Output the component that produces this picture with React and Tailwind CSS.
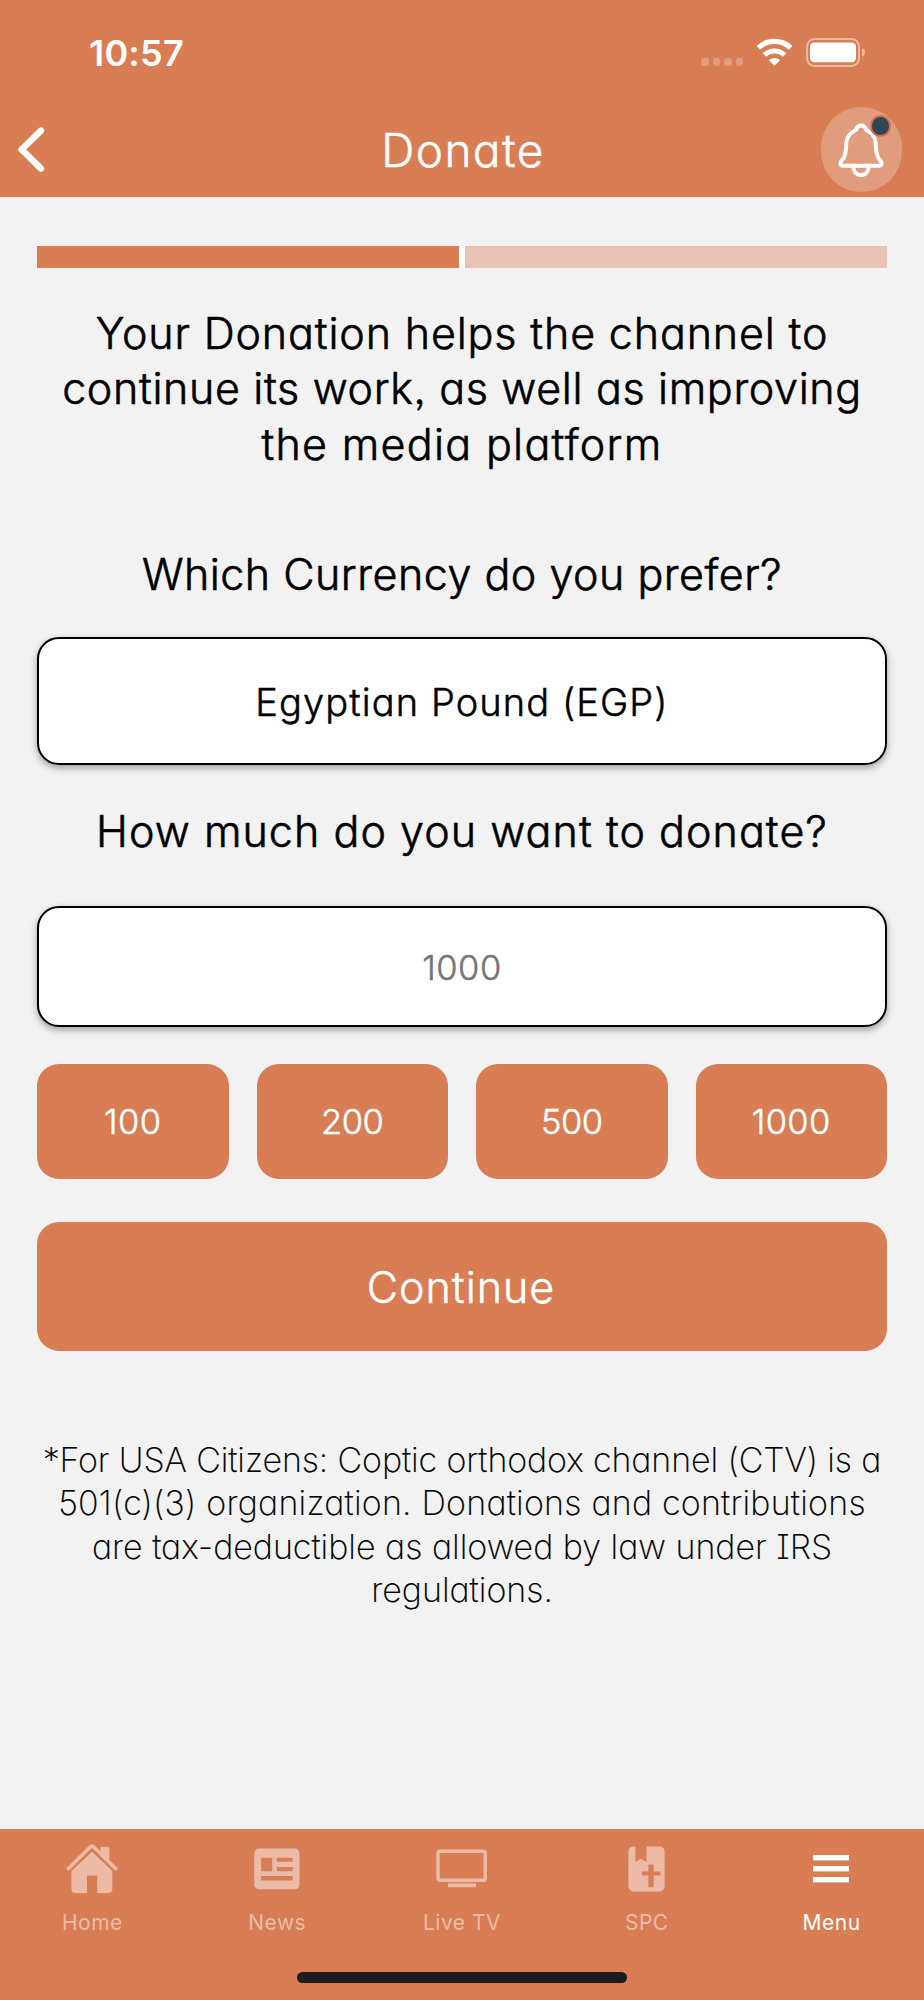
import { useState } from 'react';

const AMOUNTS = [
  { value: '100', tracking: 'tracking-[0.5px]' },
  { value: '200', tracking: 'tracking-[-0.5px]' },
  { value: '500', tracking: 'tracking-[-0.5px]' },
  { value: '1000', tracking: 'tracking-[0.4px]' },
];

function HomeIcon() {
  return (
    <svg width="52" height="50" viewBox="0 0 52 50" fill="currentColor">
      <path d="M2.5 24.5 L24.5 2.8 Q26 1.5 27.5 2.8 L49.5 24.5" fill="none" stroke="currentColor" strokeWidth="3.6" strokeLinecap="round" strokeLinejoin="round" />
      <path d="M34.5 7.8 V4.4 Q34.5 2.8 36.1 2.8 H41.7 Q43.3 2.8 43.3 4.4 V16.6 Z" />
      <path d="M26 7.8 L46.3 27 V45 Q46.3 49 42.3 49 H31.2 V31.6 H21 V49 H9.4 Q5.4 49 5.4 45 V27 Z" />
    </svg>
  );
}

function NewsIcon() {
  return (
    <svg width="46" height="42" viewBox="0 0 46 42" fill="currentColor" fillRule="evenodd">
      <path d="M4.6 0.6 H41 A4.5 4.5 0 0 1 45.5 5.1 V36.7 A4.5 4.5 0 0 1 41 41.2 H4.6 A4.5 4.5 0 0 1 .2 36.7 V5.1 A4.5 4.5 0 0 1 4.6 .6 Z M7.1 9.7 V23.3 H18.2 V9.7 Z M22.8 9.7 V13.8 H38.7 V9.7 Z M22.8 19 V23.3 H38.7 V19 Z M7.1 28.1 V32.4 H38.7 V28.1 Z" />
    </svg>
  );
}

function TvIcon() {
  return (
    <svg width="52" height="40" viewBox="0 0 52 40">
      <rect x="2" y="2.2" width="47.2" height="29" rx="1.8" fill="none" stroke="currentColor" strokeWidth="3.4" />
      <rect x="12" y="34.4" width="28" height="3.8" fill="currentColor" />
    </svg>
  );
}

function BookIcon() {
  return (
    <svg width="37" height="46" viewBox="0 0 37 46" fill="currentColor" fillRule="evenodd">
      <path d="M5 .5 H7.4 V16 L12.8 12.8 L18.5 16 V.5 H31.8 A4.8 4.8 0 0 1 36.6 5.3 V40.6 A4.8 4.8 0 0 1 31.8 45.4 H5.2 A4.8 4.8 0 0 1 .4 40.6 V5.3 A4.8 4.8 0 0 1 5 .5 Z M20.4 18.6 V25.4 H13.8 V29.6 H20.4 V41.2 H25.6 V29.6 H32.4 V25.4 H25.6 V18.6 Z" />
    </svg>
  );
}

function MenuIcon() {
  return (
    <svg className="mr-[2px]" width="36" height="28" viewBox="0 0 36 28" fill="currentColor">
      <rect y="0" width="36" height="5.4" />
      <rect y="11" width="36" height="5.4" />
      <rect y="22" width="36" height="5.4" />
    </svg>
  );
}

const TABS = [
  { label: 'Home', Icon: HomeIcon },
  { label: 'News', Icon: NewsIcon },
  { label: 'Live TV', Icon: TvIcon },
  { label: 'SPC', Icon: BookIcon },
  { label: 'Menu', Icon: MenuIcon },
];

function StatusBar() {
  return (
    <div className="flex h-[102px] items-start justify-between pr-[58px] pl-[89px]">
      <span className="mt-[31px] text-[36px] leading-[44px] font-semibold tracking-[0.2px]">10:57</span>
      <div className="mt-[37px] flex">
        <div className="mt-[21px] flex gap-[4px]">
          {[0, 1, 2, 3].map((i) => (
            <span key={i} className="h-[8px] w-[7.5px] rounded-[2.5px] bg-[#e19c7d]" />
          ))}
        </div>
        <svg className="mt-[1px] ml-[13px]" width="37" height="29" viewBox="0 0 37 29" fill="none" stroke="#fff">
          <path d="M2.4 9.8 A23.5 23.5 0 0 1 34.6 9.8" strokeWidth="5.2" />
          <path d="M8.4 17 A14.5 14.5 0 0 1 28.6 17" strokeWidth="5" />
          <path d="M18.5 27.8 L12.8 22.2 A8.2 8.2 0 0 1 24.2 22.2 Z" fill="#fff" stroke="none" />
        </svg>
        <svg className="ml-[13px]" width="60" height="30" viewBox="0 0 60 30">
          <rect x="1" y="2" width="52" height="27" rx="7.5" fill="none" stroke="#ebb9a3" strokeWidth="2" />
          <rect x="4" y="5.6" width="46" height="19.6" rx="4.2" fill="#fff" />
          <path d="M56 11 Q59 12 59 15.3 Q59 18.6 56 19.6 Z" fill="#ebb9a3" />
        </svg>
      </div>
    </div>
  );
}

function NavBar() {
  return (
    <div className="flex h-[95px] items-center justify-between pr-[22px] pl-[17px]">
      <button className="flex w-[81px]">
        <svg width="30" height="48" viewBox="0 0 30 48" fill="none" stroke="#fff" strokeWidth="6.4" strokeLinecap="round" strokeLinejoin="round">
          <path d="M24 4.6 L4.6 23.5 L24 42.6" />
        </svg>
      </button>
      <h1 className="ml-[7px] text-[46px] leading-[56px] font-light tracking-[1.4px] [-webkit-text-stroke:0.5px]">Donate</h1>
      <button className="relative flex h-[85px] w-[81px] items-center justify-center rounded-[41px] bg-[#e19c7d]">
        <svg width="46" height="54" viewBox="0 0 46 54" fill="none" stroke="#fff" strokeWidth="4" strokeLinejoin="round">
          <path d="M23 2.6 C20 2.6 18.6 4.6 17.8 7 C11.5 10 8.6 14.5 8.3 20 C8 27 8.2 31.5 5.2 35.6 C3.6 37.8 2.4 38.6 2.4 40.4 C2.4 42 3.4 42.7 5 42.7 H41 C42.6 42.7 43.6 42 43.6 40.4 C43.6 38.6 42.4 37.8 40.8 35.6 C37.8 31.5 38 27 37.7 20 C37.4 14.5 34.5 10 28.2 7 C27.4 4.6 26 2.6 23 2.6 Z" />
          <path d="M15.2 43 C15.2 48.5 18.6 52 23 52 C27.4 52 30.8 48.5 30.8 43" />
        </svg>
        <span className="absolute top-[8px] left-[49px] h-[22px] w-[21px] rounded-full border-2 border-[#d0714a] bg-[#324755]" />
      </button>
    </div>
  );
}

export default function App() {
  const [amount, setAmount] = useState('');

  return (
    <div className="flex h-[2000px] w-[924px] flex-col overflow-hidden bg-[#f2f2f2] font-['Inter',sans-serif] text-black [font-feature-settings:'cv11','ss03']">
      <header className="h-[197px] shrink-0 bg-[#d97d54] text-white">
        <StatusBar />
        <NavBar />
      </header>

      <main className="flex grow flex-col px-[37px] pt-[49px] text-center whitespace-nowrap">
        <div className="flex h-[22px] gap-[6px] bg-white">
          <div className="grow bg-[#d97d54]" />
          <div className="grow bg-[#e8c3b4]" />
        </div>

        <p className="mt-[38px] flex flex-col items-center text-[43px] leading-[55.4px] font-light [-webkit-text-stroke:0.6px]">
          <span className="tracking-[0.85px]">Your Donation helps the channel to</span>
          <span className="tracking-[0.65px]">continue its work, as well as improving</span>
          <span className="tracking-[1.3px]">the media platform</span>
        </p>

        <h2 className="mt-[74px] flex justify-center text-[43px] leading-[56px] font-light [-webkit-text-stroke:0.6px]">
          <span className="tracking-[0.5px]">Which Currency do you prefer?</span>
        </h2>
        <button className="mt-[35px] flex h-[128px] items-center justify-center rounded-[22px] border-[2.5px] border-black bg-white pt-[2px] text-[38px] font-light shadow-[0_3px_7px_rgba(0,0,0,0.35)] [-webkit-text-stroke:0.5px]">
          <span className="tracking-[1.1px]">Egyptian Pound (EGP)</span>
        </button>

        <h2 className="mt-[38px] flex justify-center text-[43px] leading-[56px] font-light [-webkit-text-stroke:0.6px]">
          <span className="tracking-[1.05px]">How much do you want to donate?</span>
        </h2>
        <input
          type="text"
          value={amount}
          onChange={(e) => setAmount(e.target.value)}
          placeholder="1000"
          className="mt-[47px] h-[121px] rounded-[22px] border-[2.5px] border-black bg-white pt-[1px] text-center text-[34.5px] font-light tracking-[0.5px] shadow-[0_3px_7px_rgba(0,0,0,0.35)] outline-none [-webkit-text-stroke:0.5px] placeholder:text-[#757575]"
        />

        <div className="mt-[37px] grid grid-cols-4 gap-[28px]">
          {AMOUNTS.map((a) => (
            <button
              key={a.value}
              onClick={() => setAmount(a.value)}
              className="flex h-[115px] items-center justify-center rounded-[22px] bg-[#d97d54] text-[34.5px] font-light text-white [-webkit-text-stroke:0.5px]"
            >
              <span className={a.tracking}>{a.value}</span>
            </button>
          ))}
        </div>

        <button className="mt-[43px] flex h-[129px] items-center justify-center rounded-[22px] bg-[#d97d54] pt-[2px] pr-[2px] text-[43px] font-light text-white [-webkit-text-stroke:0.5px]">
          <span className="tracking-[1px]">Continue</span>
        </button>

        <p className="mt-[87px] flex flex-col items-center text-[34px] leading-[43.2px] font-extralight [font-feature-settings:'cv11','ss03','cv08'] [-webkit-text-stroke:0.2px]">
          <span className="tracking-[-0.1px]">*For USA Citizens: Coptic orthodox channel (CTV) is a</span>
          <span className="tracking-[0.22px]">501(c)(3) organization. Donations and contributions</span>
          <span className="tracking-[0px]">are tax-deductible as allowed by law under IRS</span>
          <span className="tracking-[0px]">regulations.</span>
        </p>
      </main>

      <nav className="flex h-[171px] shrink-0 flex-col items-center bg-[#d97d54] [font-feature-settings:normal]">
        <div className="grid w-full grid-cols-5">
          {TABS.map(({ label, Icon }) => (
            <a
              key={label}
              className={`flex flex-col items-center ${label === 'Menu' ? 'text-white' : 'text-[#ecbba7]'}`}
            >
              <span className="flex h-[80px] items-center">
                <Icon />
              </span>
              <span className="mt-[1px] text-[21px] leading-[26px] tracking-[0.5px]">{label}</span>
            </a>
          ))}
        </div>
        <div className="mt-[35.5px] h-[11px] w-[330px] rounded-full bg-[#1c1c1c]" />
      </nav>
    </div>
  );
}
